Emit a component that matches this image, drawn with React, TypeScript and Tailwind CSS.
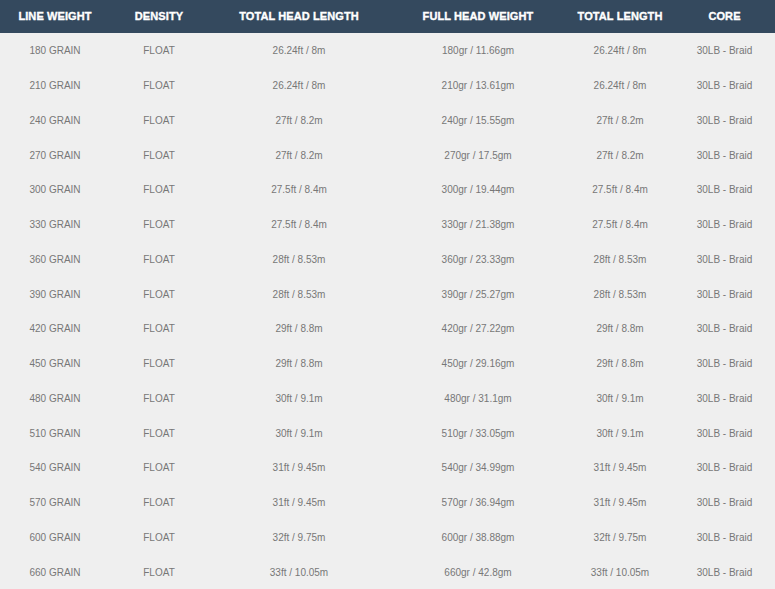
import React from "react";

const rows: string[][] = [
  ["180 GRAIN", "FLOAT", "26.24ft / 8m", "180gr / 11.66gm", "26.24ft / 8m", "30LB - Braid"],
  ["210 GRAIN", "FLOAT", "26.24ft / 8m", "210gr / 13.61gm", "26.24ft / 8m", "30LB - Braid"],
  ["240 GRAIN", "FLOAT", "27ft / 8.2m", "240gr / 15.55gm", "27ft / 8.2m", "30LB - Braid"],
  ["270 GRAIN", "FLOAT", "27ft / 8.2m", "270gr / 17.5gm", "27ft / 8.2m", "30LB - Braid"],
  ["300 GRAIN", "FLOAT", "27.5ft / 8.4m", "300gr / 19.44gm", "27.5ft / 8.4m", "30LB - Braid"],
  ["330 GRAIN", "FLOAT", "27.5ft / 8.4m", "330gr / 21.38gm", "27.5ft / 8.4m", "30LB - Braid"],
  ["360 GRAIN", "FLOAT", "28ft / 8.53m", "360gr / 23.33gm", "28ft / 8.53m", "30LB - Braid"],
  ["390 GRAIN", "FLOAT", "28ft / 8.53m", "390gr / 25.27gm", "28ft / 8.53m", "30LB - Braid"],
  ["420 GRAIN", "FLOAT", "29ft / 8.8m", "420gr / 27.22gm", "29ft / 8.8m", "30LB - Braid"],
  ["450 GRAIN", "FLOAT", "29ft / 8.8m", "450gr / 29.16gm", "29ft / 8.8m", "30LB - Braid"],
  ["480 GRAIN", "FLOAT", "30ft / 9.1m", "480gr / 31.1gm", "30ft / 9.1m", "30LB - Braid"],
  ["510 GRAIN", "FLOAT", "30ft / 9.1m", "510gr / 33.05gm", "30ft / 9.1m", "30LB - Braid"],
  ["540 GRAIN", "FLOAT", "31ft / 9.45m", "540gr / 34.99gm", "31ft / 9.45m", "30LB - Braid"],
  ["570 GRAIN", "FLOAT", "31ft / 9.45m", "570gr / 36.94gm", "31ft / 9.45m", "30LB - Braid"],
  ["600 GRAIN", "FLOAT", "32ft / 9.75m", "600gr / 38.88gm", "32ft / 9.75m", "30LB - Braid"],
  ["660 GRAIN", "FLOAT", "33ft / 10.05m", "660gr / 42.8gm", "33ft / 10.05m", "30LB - Braid"],
];

const headers = ["LINE WEIGHT", "DENSITY", "TOTAL HEAD LENGTH", "FULL HEAD WEIGHT", "TOTAL LENGTH", "CORE"];

export default function App() {
  return (
    <div
      className="w-[775px] h-[589px] bg-[#efefef] overflow-hidden"
      style={{ fontFamily: '"Liberation Sans", Arial, sans-serif' }}
    >
      <div className="grid grid-cols-[110px_98px_182px_176px_108px_101px] h-[33px] bg-[#34495e] text-white text-[11px] font-bold tracking-[0.1px] [-webkit-text-stroke:0.35px_white]">
        {headers.map((h) => (
          <div key={h} className="flex items-center justify-center">
            {h}
          </div>
        ))}
      </div>
      {rows.map((r, i) => (
        <div
          key={i}
          className="grid grid-cols-[110px_98px_182px_176px_108px_101px] h-[34.75px] text-[10px] text-[#777777]"
        >
          {r.map((c, j) => (
            <div key={j} className="flex items-center justify-center pt-[1px]">
              {c}
            </div>
          ))}
        </div>
      ))}
    </div>
  );
}
